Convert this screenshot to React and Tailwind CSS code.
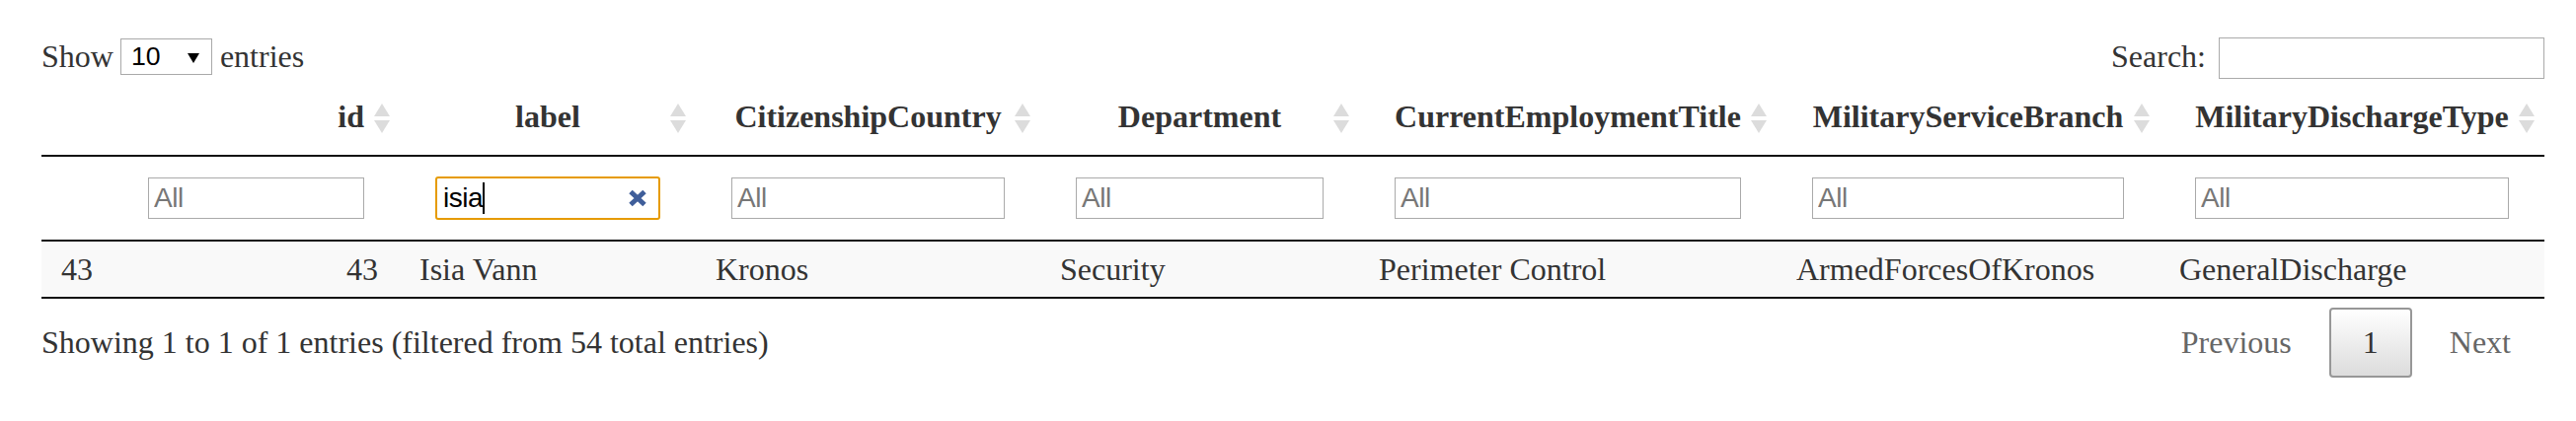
import React from "react";

const cols = [72, 291, 300, 349, 323, 423, 388, 390];
const headers = [
  { t: "", sort: false },
  { t: "id", right: true, sort: true },
  { t: "label", sort: true },
  { t: "CitizenshipCountry", sort: true },
  { t: "Department", sort: true },
  { t: "CurrentEmploymentTitle", sort: true },
  { t: "MilitaryServiceBranch", sort: true },
  { t: "MilitaryDischargeType", sort: true },
];
const row = [
  "43",
  "43",
  "Isia Vann",
  "Kronos",
  "Security",
  "Perimeter Control",
  "ArmedForcesOfKronos",
  "GeneralDischarge",
];

function SortIcon() {
  return (
    <svg
      width="16"
      height="30"
      viewBox="0 0 16 30"
      className="absolute right-[10px] top-[25px]"
    >
      <polygon points="8,0 16,13 0,13" fill="#dcdcdc" />
      <polygon points="0,17 16,17 8,30" fill="#dcdcdc" />
    </svg>
  );
}

function FilterInput() {
  return (
    <input
      type="text"
      placeholder="All"
      className="block w-full h-[42px] my-[1px] border border-[#aaa] bg-white pl-[5px] font-['Liberation_Sans'] text-[28px] tracking-[-0.5px] text-black placeholder:text-[#777] outline-none"
    />
  );
}

function ActiveFilter() {
  return (
    <div className="flex items-center h-[44px] border-2 border-[#e69b00] rounded-[3px] bg-white pl-[6px] pr-[11px] font-['Liberation_Sans'] text-[28px] tracking-[-0.5px] text-black">
      <span className="leading-[32px]">isia</span>
      <span className="w-[2px] h-[32px] bg-black" />
      <svg className="ml-auto" width="20" height="18" viewBox="0 0 20 18">
        <path
          d="M3 2.5 L17 15.5 M17 2.5 L3 15.5"
          stroke="#3f5e9a"
          strokeWidth="5"
          fill="none"
        />
      </svg>
    </div>
  );
}

export default function App() {
  return (
    <div className="w-[2610px] h-[427px] bg-white pl-[42px] pr-[32px] font-['Liberation_Serif',serif] text-[32px] leading-[37px] text-[#333]">
      {/* top controls */}
      <div className="flex justify-between items-start pt-[38px]">
        <div className="flex items-center h-[38px]">
          <span>Show</span>
          <div className="ml-[7px] mr-[8px] w-[93px] h-[37px] border border-[#a9a9a9] bg-white flex items-center pl-[10px] pr-[12px] font-['Liberation_Sans'] text-[26.67px] text-black">
            <span>10</span>
            <svg className="ml-auto mt-[3px]" width="12" height="10" viewBox="0 0 12 10">
              <polygon points="0,0 12,0 6,10" fill="#000" />
            </svg>
          </div>
          <span>entries</span>
        </div>
        <div className="flex items-center h-[42px]">
          <span className="-mt-[3px]">Search:</span>
          <input
            type="text"
            className="ml-[13px] w-[330px] h-[42px] border border-[#aaa] bg-white outline-none"
          />
        </div>
      </div>

      {/* table */}
      <table className="w-full table-fixed border-separate border-spacing-0">
        <colgroup>
          {cols.map((w, i) => (
            <col key={i} style={{ width: w }} />
          ))}
        </colgroup>
        <thead>
          <tr>
            {headers.map((h, i) => (
              <th
                key={i}
                className={
                  "relative px-[36px] py-[20px] leading-[37px] font-bold whitespace-nowrap border-b-2 border-[#111] " +
                  (h.right ? "text-right" : "text-center")
                }
              >
                {h.t}
                {h.sort && <SortIcon />}
              </th>
            ))}
          </tr>
          <tr>
            {headers.map((h, i) => (
              <td
                key={i}
                className="px-[36px] py-[20px] border-b-2 border-[#111] align-middle"
              >
                {i === 0 ? null : i === 2 ? <ActiveFilter /> : <FilterInput />}
              </td>
            ))}
          </tr>
        </thead>
        <tbody>
          <tr>
            {row.map((c, i) => (
              <td
                key={i}
                className={
                  "py-[10px] leading-[36px] bg-[#f9f9f9] border-b-2 border-[#111] whitespace-nowrap " +
                  (i === 1 ? "text-right pl-[20px] pr-[22px]" : "px-[20px]")
                }
              >
                {c}
              </td>
            ))}
          </tr>
        </tbody>
      </table>

      {/* footer */}
      <div className="flex justify-between items-center mt-[9px] h-[71px]">
        <div>Showing 1 to 1 of 1 entries (filtered from 54 total entries)</div>
        <div className="flex items-center gap-[4px]">
          <div className="h-[71px] px-[32px] border-2 border-transparent flex items-center text-[#666]">
            Previous
          </div>
          <div className="h-[71px] px-[32px] border-2 border-[#979797] rounded-[4px] bg-gradient-to-b from-white to-[#dcdcdc] flex items-center text-[#333]">
            1
          </div>
          <div className="h-[71px] px-[32px] border-2 border-transparent flex items-center text-[#666]">
            Next
          </div>
        </div>
      </div>
    </div>
  );
}
